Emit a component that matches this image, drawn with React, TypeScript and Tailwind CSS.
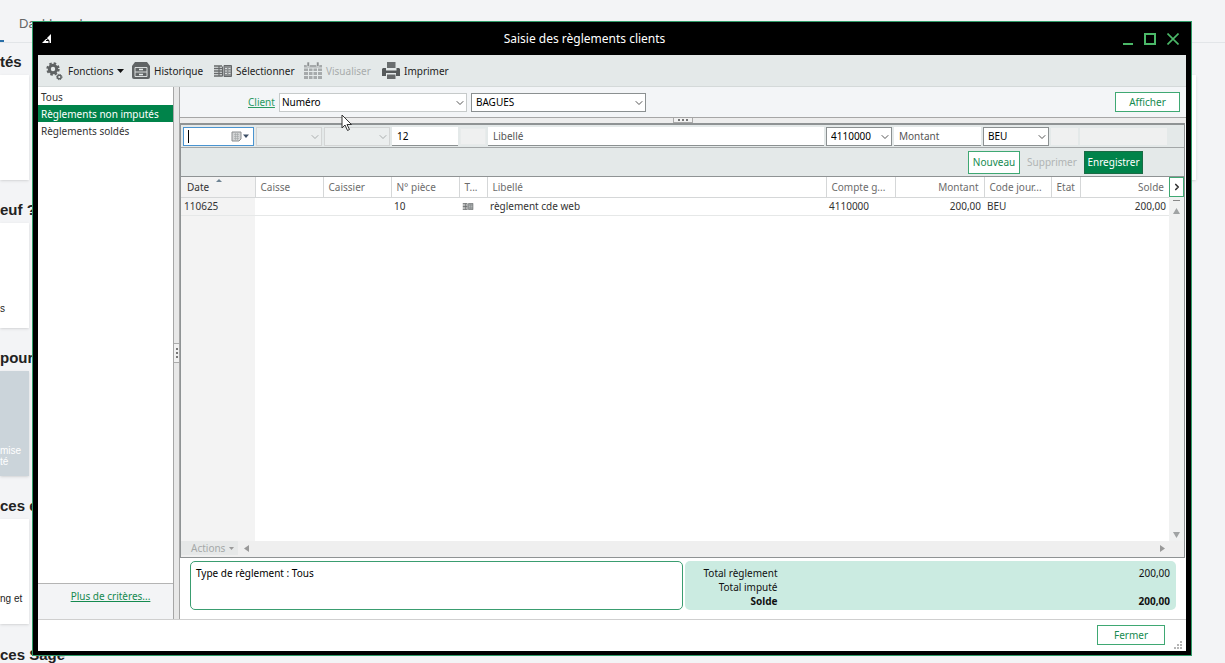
import React from 'react';
import { ChevronDown, ChevronRight } from 'lucide-react';
import { clsx } from 'clsx';

const FILTERS = ['Tous', 'Règlements non imputés', 'Règlements soldés'];

// Sections of the desktop page that stays visible behind the window
const SECTIONS = [
    { title: 'tés', lines: [], card: 'bg-white', wide: true },
    { title: 'euf ?', lines: ['s'], card: 'bg-white pb-[14px]' },
    { title: 'pour', lines: ['mise', 'té'], card: 'bg-[#cbd4da] pb-[9px] text-white' },
    { title: 'ces e', lines: ['ng et'], card: 'bg-white pb-5' },
];

const COLUMNS = [
    { label: 'Date', width: 'w-[74px]', value: '110625' },
    { label: 'Caisse', width: 'w-[68px]', value: '' },
    { label: 'Caissier', width: 'w-[68px]', value: '' },
    { label: 'N° pièce', width: 'w-[68px]', value: '10' },
    { label: 'T...', width: 'w-[28px]', value: 'icon' },
    { label: 'Libellé', width: '', value: 'règlement cde web' },
    { label: 'Compte g...', width: 'w-[69px]', value: '4110000' },
    { label: 'Montant', width: 'w-[89px]', value: '200,00', right: true },
    { label: 'Code jour...', width: 'w-[67px]', value: 'BEU' },
    { label: 'Etat', width: 'w-[29px]', value: '' },
    { label: 'Solde', width: 'w-[89px]', value: '200,00', right: true },
];

const GearsIcon = () => (
    <svg width="18" height="20" viewBox="0 0 18 20" fill="none" stroke="#5e6263">
        <circle cx="7" cy="8" r="3.7" strokeWidth="3" />
        <circle cx="7" cy="8" r="5.7" strokeWidth="2" strokeDasharray="2.5 1.977" />
        <circle cx="13.3" cy="16" r="1.8" strokeWidth="1.4" />
        <circle cx="13.3" cy="16" r="2.7" strokeWidth="1" strokeDasharray="1.3 .82" />
    </svg>
);

const CabinetIcon = () => (
    <svg width="18" height="17" viewBox="0 0 18 17">
        <path d="M3 0h12l3 4v11q0 2-2 2H2q-2 0-2-2V4z" fill="#606465" />
        <path d="M3 5.500h12v9H3zM3 10h12" stroke="#d9dddd" fill="none" />
        <path d="M7 7.500h4M7 12.500h4" stroke="#e4e9e9" strokeWidth="1.4" />
    </svg>
);

const LedgerIcon = ({ width = 18, height = 12 }: { width?: number; height?: number }) => (
    <svg width={width} height={height} viewBox="0 0 18 12" fill="none" stroke="#66696a">
        <path d="M0 1h8M0 3.500h8M0 6h8M0 8.500h8M0 11h8" strokeWidth="1.5" />
        <path d="M5 1v10" strokeWidth="1.2" />
        <path d="M8.500 1.500v10" strokeWidth="1" />
        <path d="M10 .5h7.500v11H10z" fill="#8b8f90" strokeWidth="1" />
        <path d="M11 3.500h2M14.500 3.500h2M11 6h2M14.500 6h2M11 8.500h2M14.500 8.500h2" stroke="#d9dddd" />
    </svg>
);

const CalendarIcon = () => (
    <svg width="18" height="18" viewBox="0 0 18 18">
        <path d="M0 3h18v14H0z" fill="#a6aaab" />
        <path d="M3 0h2.500v4.500H3zM12.500 0H15v4.500h-2.500z" fill="#8d9192" stroke="#e4e9e9" strokeWidth=".6" />
        <path d="M0 6h18M0 9.500h18M0 13.500h18M4.500 6v11M9 6v11M13.500 6v11" stroke="#e4e9e9" />
    </svg>
);

const PrinterIcon = () => (
    <svg width="18" height="17" viewBox="0 0 18 17">
        <path d="M5 0h8.500v6H5z" fill="#6a6e6f" />
        <path d="M1 6h3v2.500h10.500V6H17l1 1v7h-4v-3H4v3H0V7z" fill="#55595a" />
        <path d="M5 12.500h8.500V17H5z" fill="#66696a" />
    </svg>
);

interface ComboProps {
    label: string;
    value?: string;
    disabled?: boolean;
    light?: boolean;
    className?: string;
}

const Combo: React.FC<ComboProps> = ({ label, value = '', disabled, light, className }) => (
    <div className={clsx('relative h-[19px]', className)}>
        <select
            aria-label={label}
            disabled={disabled}
            className={clsx(
                'block h-full w-full appearance-none border pr-4 leading-[16px]',
                light ? 'pl-[2px]' : 'pl-1',
                disabled && 'border-[#d3d5d5] bg-[#ebeeee]',
                !disabled && (light ? 'border-[#c6caca] bg-white text-black' : 'border-[#8b9091] bg-white text-black')
            )}
        >
            <option>{value}</option>
        </select>
        <ChevronDown
            size={12}
            strokeWidth={2}
            className={clsx('pointer-events-none absolute right-[1px] top-[4px]', disabled ? 'text-[#a9adad]' : 'text-[#555]')}
        />
    </div>
);

const Background = () => (
    <div className="h-full bg-[#f3f4f6] font-['Liberation_Sans',Arial,sans-serif] text-[#222]">
        <div className="flex h-[43px] items-end border-b border-[#e2e5e8] text-[13px] text-[#666]">
            <div className="h-[2px] w-1 bg-[#2a6fa8]" />
            <span className="pb-[10px] pl-[15px] leading-4">Dashboard</span>
        </div>
        {SECTIONS.map((s) => (
            <section key={s.title} className="h-[148px]">
                <h2 className="h-8 whitespace-nowrap pt-[10px] text-[15px] font-bold leading-[18px]">{s.title}</h2>
                <div className="flex h-[105px] gap-6 pr-[29px]">
                    <div className={clsx('flex w-[29px] flex-col justify-end whitespace-nowrap text-[10px] leading-[11px] shadow', s.card)}>
                        {s.lines.map((l) => (
                            <span key={l}>{l}</span>
                        ))}
                    </div>
                    {s.wide && <div className="flex-1 bg-white shadow" />}
                </div>
            </section>
        ))}
        <h2 className="pt-[11px] text-[15px] font-bold leading-[18px]">ces Sage</h2>
    </div>
);

const TitleBar = () => (
    <header className="flex h-[33px] shrink-0 items-center bg-black px-1 text-white">
        <svg width="10" height="10" viewBox="0 0 10 10" className="shrink-0">
            <path d="M0 9L9 0v9z" fill="#fff" />
            <path d="M3 3l4 3.500M4 6.500h3v2.500" stroke="#000" fill="none" />
        </svg>
        <h1 className="flex-1 pr-[6px] text-center text-[12px]">Saisie des règlements clients</h1>
        <div className="flex items-center gap-[11px] pr-[3px]">
            <button aria-label="Réduire" className="h-3 w-[10px] border-b-2 border-[#4bb868]" />
            <button aria-label="Agrandir" className="h-3 w-3 border-2 border-[#4bb868]" />
            <button aria-label="Fermer la fenêtre">
                <svg width="12" height="12" viewBox="0 0 12 12" stroke="#4bb868" strokeWidth="1.6">
                    <path d="M.5.5l11 11M11.5.5l-11 11" />
                </svg>
            </button>
        </div>
    </header>
);

const Toolbar = () => (
    <nav className="flex h-8 shrink-0 items-center border-b border-[#d4d9d9] bg-[#e4e9e9] pl-2 text-[#222]">
        <button className="flex w-[86px] items-center gap-1">
            <GearsIcon />
            Fonctions
            <svg width="7" height="4" viewBox="0 0 7 4"><path d="M0 0h7L3.500 4z" fill="#111" /></svg>
        </button>
        <button className="flex w-[82px] items-center gap-1"><CabinetIcon />Historique</button>
        <button className="flex w-[90px] items-center gap-1"><LedgerIcon />Sélectionner</button>
        <button disabled className="flex w-[78px] items-center gap-1 text-[#a8acac]"><CalendarIcon />Visualiser</button>
        <button className="flex items-center gap-1"><PrinterIcon />Imprimer</button>
    </nav>
);

const Sidebar = () => (
    <aside className="flex w-[135px] shrink-0 flex-col">
        <ul className="flex-1 pt-px">
            {FILTERS.map((f, i) => (
                <li key={f}>
                    <button
                        className={clsx(
                            'block h-[17px] w-full whitespace-nowrap pl-[3px] text-left',
                            i === 1 ? 'bg-[#00834a] text-white' : 'text-[#333]'
                        )}
                    >
                        {f}
                    </button>
                </li>
            ))}
        </ul>
        <div className="h-9 border-t border-[#b4b4b4] bg-[#f3f4f6] pt-[5px] pl-[10px] text-center">
            <a href="#criteres" className="text-[#158a50] underline">Plus de critères...</a>
        </div>
    </aside>
);

const EntryForm = () => (
    <form className="bg-[#e4e9e9]">
        <div className="grid h-[23px] grid-cols-[71px_66px_66px_66px_26px_1fr_66px_87px_66px_27px_87px_15px] items-center gap-[2px] border-b border-[#a3a7a8] pl-[2px] [&>*]:min-w-0">
            <div className="flex h-[19px] items-center border border-[#4a94d0] bg-white pr-1">
                <span className="ml-1 h-[13px] w-px bg-black" />
                <input aria-label="Date" className="min-w-0 flex-1 outline-none" />
                <svg width="18" height="11" viewBox="0 0 18 11">
                    <path d="M1 1h9v7l-2 2H1z" fill="#d3d5d6" stroke="#8b8e90" />
                    <path d="M3 3.500h5M3 5.500h5M3 7.500h5M4.500 2v7M6.500 2v7" stroke="#a3a6a8" strokeWidth=".6" />
                    <path d="M12 3.500h6L15 7z" fill="#3d4f66" />
                </svg>
            </div>
            <Combo label="Caisse" disabled />
            <Combo label="Caissier" disabled />
            <input aria-label="N° pièce" defaultValue="12" className="h-[19px] border-b border-[#8b9091] bg-white pl-[5px]" />
            <div className="h-[17px] border border-[#e8ebeb] bg-[#eff0f0]" />
            <input aria-label="Libellé" placeholder="Libellé" className="h-[19px] border-b border-[#8b9091] bg-white pl-[5px] placeholder:text-[#555]" />
            <Combo label="Compte général" value="4110000" />
            <input aria-label="Montant" placeholder="Montant" className="h-[19px] border-b border-[#8b9091] bg-white pl-[5px] placeholder:text-[#555]" />
            <Combo label="Code journal" value="BEU" />
            <div className="h-[17px] bg-[#eff0f0]" />
            <div className="h-[17px] bg-[#eff0f0]" />
        </div>
        <div className="flex h-7 items-center justify-end pr-[41px]">
            <button type="button" className="h-[23px] w-[52px] border border-[#3fa873] bg-white text-[#158a50]">Nouveau</button>
            <button type="button" disabled className="h-[23px] w-16 text-[#b0b4b4]">Supprimer</button>
            <button type="submit" className="h-[23px] w-[59px] border border-[#1a6b45] bg-[#00834a] text-white">Enregistrer</button>
        </div>
    </form>
);

const PaymentsTable = () => (
    <div className="flex flex-1 border-t border-[#8f9394]">
        <div className="flex min-w-0 flex-1 flex-col">
            <table className="w-full table-fixed border-collapse">
                <thead>
                    <tr className="h-5 text-left text-[#6c6c6c]">
                        {COLUMNS.map((c, i) => (
                            <th
                                key={c.label}
                                className={clsx(
                                    'relative overflow-hidden whitespace-nowrap border-b border-[#d5d7d8] font-normal',
                                    c.width,
                                    i === 0 ? 'bg-[#f3f3f3] px-[6px] text-[#333]' : 'border-l bg-white px-[5px]',
                                    c.right && 'text-right'
                                )}
                            >
                                {c.label}
                                {i === 0 && (
                                    <svg width="6" height="3" viewBox="0 0 6 3" className="absolute left-[35px] top-[2px]">
                                        <path d="M3 0l3 3H0z" fill="#6f8494" />
                                    </svg>
                                )}
                            </th>
                        ))}
                    </tr>
                </thead>
                <tbody>
                    <tr className="h-[18px] border-b border-[#e6e8e8] text-[#333]">
                        {COLUMNS.map((c, i) => (
                            <td
                                key={c.label}
                                className={clsx('whitespace-nowrap px-[3px]', i === 0 && 'bg-[#f3f3f3]', c.right && 'text-right')}
                            >
                                {c.value === 'icon' ? <LedgerIcon width={12} height={7} /> : c.value}
                            </td>
                        ))}
                    </tr>
                </tbody>
            </table>
            <div className="w-[74px] flex-1 bg-[#f3f3f3]" />
        </div>
        <div className="flex w-[15px] flex-col items-center bg-[#f0f1f1]">
            <button aria-label="Colonnes suivantes" className="flex h-5 w-full items-center justify-center border border-[#3fa873] bg-white">
                <ChevronRight size={10} strokeWidth={4} className="shrink-0 text-[#333]" />
            </button>
            <div className="mt-[3px] h-px w-[7px] bg-[#888]" />
            <svg width="7" height="6" viewBox="0 0 7 6" className="mt-[7px]"><path d="M3.500 0L7 6H0z" fill="#a0a3a4" /></svg>
            <div className="flex-1" />
            <svg width="7" height="6" viewBox="0 0 7 6" className="mb-[3px]"><path d="M3.500 6L7 0H0z" fill="#a0a3a4" /></svg>
        </div>
    </div>
);

const Summary = () => (
    <div className="flex h-[61px] shrink-0 items-start gap-[2px] pt-[3px] pl-[10px] pr-[10px]">
        <div className="h-[49px] flex-1 rounded-[5px] border border-[#3a9d70] pt-1 pl-[5px] text-black">
            Type de règlement : Tous
        </div>
        <dl className="grid h-[49px] flex-1 grid-cols-[93px_1fr] content-start rounded-[5px] bg-[#cbebe1] pt-[5px] pr-[6px] text-right leading-[14px] text-[#111]">
            <dt>Total règlement</dt>
            <dd>200,00</dd>
            <dt>Total imputé</dt>
            <dd />
            <dt className="font-bold">Solde</dt>
            <dd className="font-bold">200,00</dd>
        </dl>
    </div>
);

export default function App() {
    return (
        <div className="relative h-screen overflow-hidden">
            <Background />
            <div className="absolute bottom-[7px] left-8 right-[33px] top-[21px] flex flex-col border border-[#2f9c68] bg-black px-[5px] pb-1 font-['Noto_Sans','Open_Sans',sans-serif] text-[10px] leading-[14px]">
                <TitleBar />
                <Toolbar />
                <main className="flex min-h-0 flex-1 bg-white">
                    <Sidebar />
                    <div className="flex w-[7px] shrink-0 items-center border-x border-[#a6a6a6] bg-[#e8e8e8]">
                        <div className="flex h-5 w-full flex-col items-center justify-center gap-[2px] border-y border-[#aaa] bg-[#f1f1f1]">
                            <span className="h-[2px] w-[2px] bg-[#777]" />
                            <span className="h-[2px] w-[2px] bg-[#777]" />
                            <span className="h-[2px] w-[2px] bg-[#777]" />
                        </div>
                    </div>
                    <div className="flex min-w-0 flex-1 flex-col">
                        <div className="flex h-[30px] shrink-0 items-center bg-[#f3f5f7] pl-[68px] pr-[6px]">
                            <a href="#client" className="mr-1 text-[#2a9a62] underline">Client</a>
                            <Combo label="Critère client" value="Numéro" light className="mr-1 w-[188px]" />
                            <Combo label="Client" value="BAGUES" className="w-[175px]" />
                            <button className="ml-auto h-5 w-[65px] border border-[#3fa873] bg-white text-[#158a50]">Afficher</button>
                        </div>
                        <div className="flex h-[6px] shrink-0 justify-center border-t border-[#a6a6a6] bg-[#ededed]">
                            <div className="flex h-[5px] w-5 items-center justify-center gap-[2px] border-x border-b border-[#aaa] bg-[#f1f1f1]">
                                <span className="h-[2px] w-[2px] bg-[#777]" />
                                <span className="h-[2px] w-[2px] bg-[#777]" />
                                <span className="h-[2px] w-[2px] bg-[#777]" />
                            </div>
                        </div>
                        <div className="mr-[1px] flex min-h-0 flex-1 flex-col border border-t-2 border-[#8f9394]">
                            <EntryForm />
                            <PaymentsTable />
                            <div className="flex h-4 shrink-0 items-center bg-[#efefef] pb-[2px]">
                                <button disabled className="flex w-[57px] items-center gap-1 bg-[#e6e8e8] pl-[10px] text-[#a5a8a8]">
                                    Actions
                                    <svg width="5" height="3" viewBox="0 0 5 3"><path d="M0 0h5L2.500 3z" fill="#999" /></svg>
                                </button>
                                <svg width="5" height="7" viewBox="0 0 5 7" className="ml-[6px]"><path d="M5 0v7L0 3.500z" fill="#999" /></svg>
                                <svg width="5" height="7" viewBox="0 0 5 7" className="ml-auto mr-[19px]"><path d="M0 0v7l5-3.500z" fill="#999" /></svg>
                            </div>
                        </div>
                        <Summary />
                    </div>
                </main>
                <footer className="relative flex h-8 shrink-0 items-start justify-end border-t border-[#cfcfcf] bg-white pr-[21px] pt-[5px]">
                    <button className="h-5 w-[68px] border border-[#3fa873] bg-white text-[#158a50]">Fermer</button>
                    <svg width="8" height="8" viewBox="0 0 8 8" className="absolute bottom-[2px] right-1">
                        <path d="M6 0h2v2H6zM3 3h2v2H3zM6 3h2v2H6zM0 6h2v2H0zM3 6h2v2H3zM6 6h2v2H6z" fill="#b5b5b5" />
                    </svg>
                </footer>
            </div>
            <svg width="12" height="18" viewBox="0 0 12 18" className="pointer-events-none absolute left-[341px] top-[114px]">
                <path d="M1 1v13l3-3 2.500 5.500 2-1L6 10.500h4.500z" fill="#fff" stroke="#333" />
            </svg>
        </div>
    );
}
